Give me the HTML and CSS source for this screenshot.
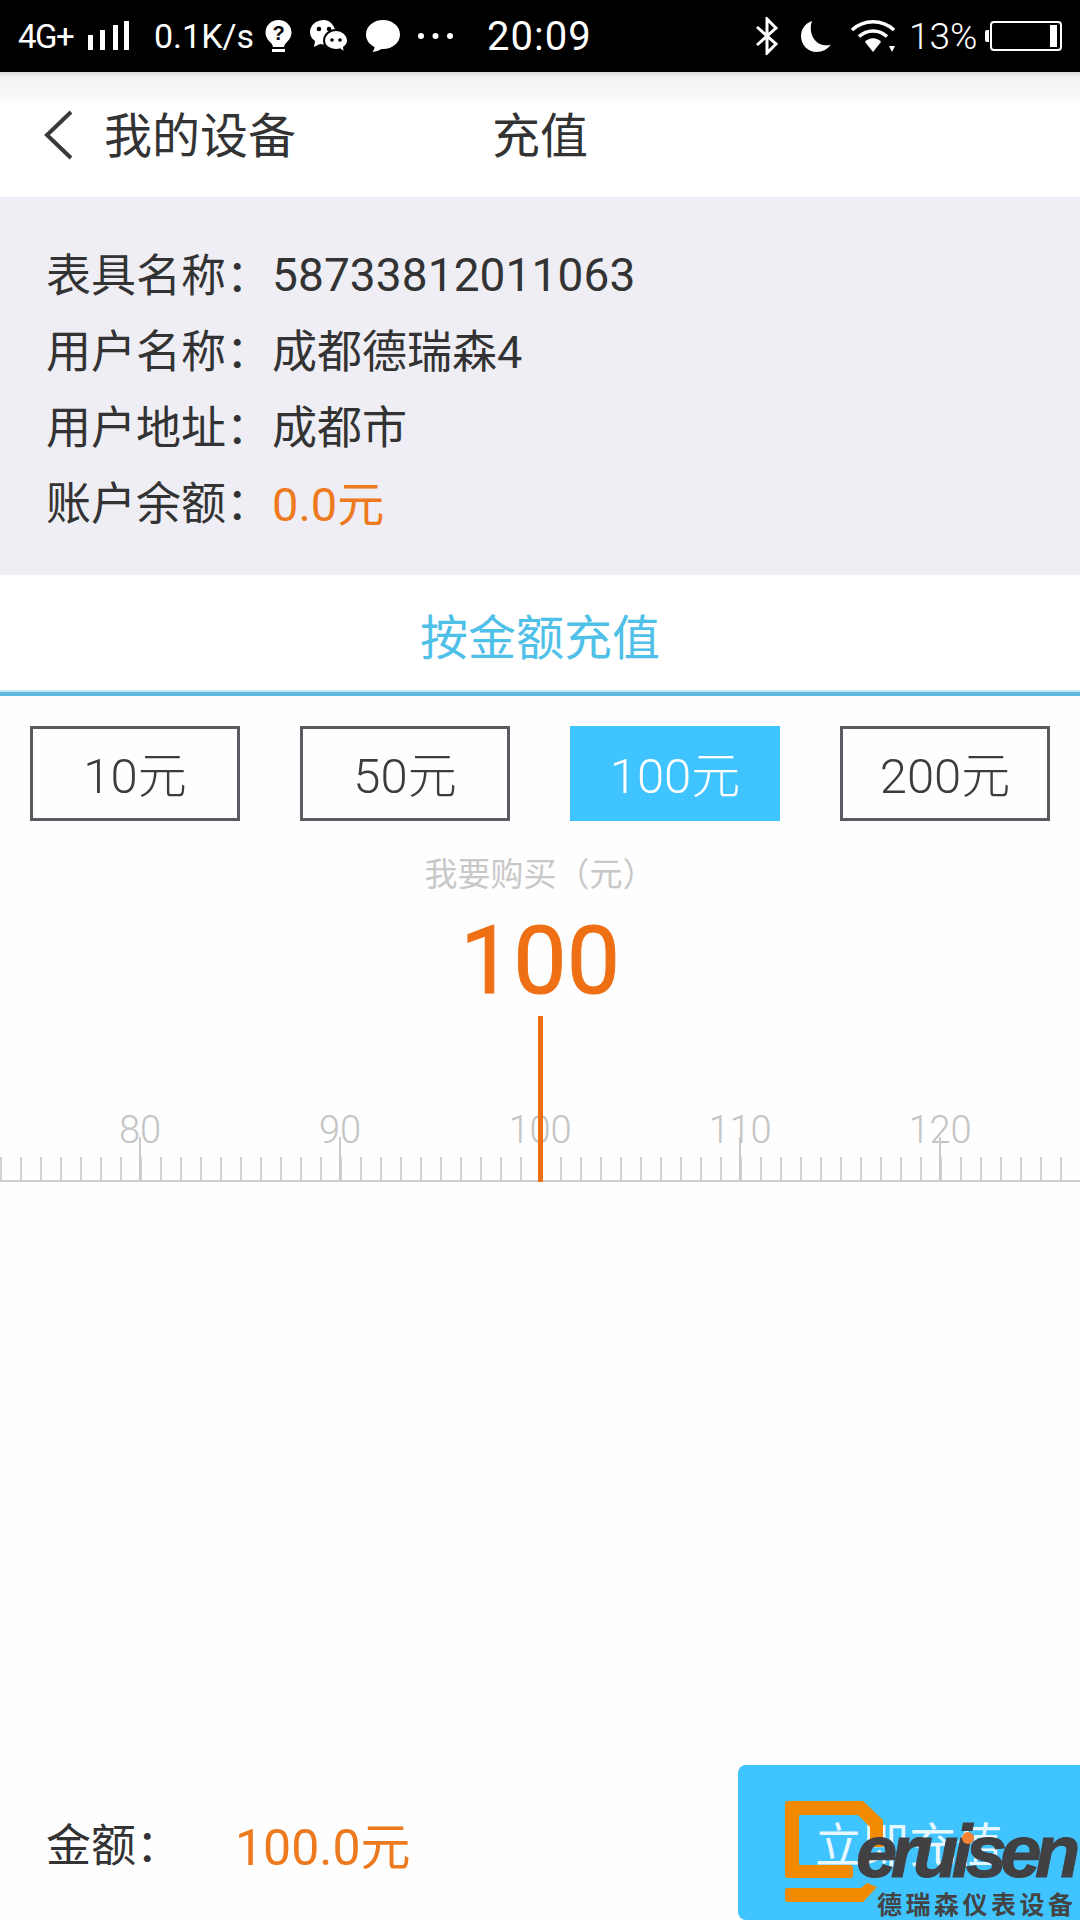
FILE: index.html
```html
<!DOCTYPE html>
<html lang="zh">
<head>
  <meta charset="UTF-8" />
  <meta name="viewport" content="width=device-width, initial-scale=1.0" />
  <title>充值</title>
  <link rel="stylesheet" href="styles.css">
</head>
<body>
  <div class="page">
    <div class="statusbar">
      <span class="net">4G+</span>
      <svg class="ic-signal" width="41" height="29" viewBox="0 0 41 29" fill="#fff">
        <rect x="0" y="14" width="5" height="15"/>
        <rect x="12" y="9" width="5" height="20"/>
        <rect x="25" y="4" width="5" height="25"/>
        <rect x="36" y="0" width="5" height="29"/>
      </svg>
      <span class="speed">0.1K/s</span>
      <svg class="ic-bulb" width="27" height="32" viewBox="0 0 27 32">
        <path fill="#fff" d="M13.5 0C6 0 0.500 5.500 0.500 12.500C0.500 17 3 20 5.500 22.500C7 24 7.500 25 8 27H19C19.500 25 20 24 21.500 22.500C24 20 26.500 17 26.500 12.500C26.500 5.500 21 0 13.500 0Z"/>
        <rect x="7" y="29" width="13" height="3" fill="#fff"/>
        <text x="13.500" y="20" text-anchor="middle" class="bulb-mark">?</text>
      </svg>
      <svg class="ic-wechat" width="38" height="33" viewBox="0 0 38 33">
        <path fill="#fff" d="M14 0C6 0 0 5.500 0 12C0 16 2 19 5 21L4 27L10 24C12 24.500 14 24.500 16 24.500L26 12C24 5 20 0 14 0Z"/>
        <path fill="#fff" stroke="#000" stroke-width="2" d="M26 10C19 10 14 15 14 20.500C14 26 19 30 26 30C27.500 30 29 30 30 29.500L35 33L34 27.500C36.500 25.500 38 23.500 38 20.500C38 15 33 10 26 10Z"/>
        <circle cx="9" cy="9" r="2.300"/>
        <circle cx="19" cy="9" r="2.300"/>
        <circle cx="22" cy="20" r="1.800"/>
        <circle cx="30" cy="20" r="1.800"/>
      </svg>
      <svg class="ic-msg" width="34" height="32" viewBox="0 0 34 32" fill="#fff">
        <path d="M17 0C7.500 0 0 6.300 0 14.500C0 20 3.500 24.500 8.500 27C8.500 29 7.500 30.500 6.500 32C10 31.500 13 30.500 15.500 29C16 29 16.500 29 17 29C26.500 29 34 22.700 34 14.500C34 6.300 26.500 0 17 0Z"/>
      </svg>
      <svg class="ic-dots" width="35" height="6" viewBox="0 0 35 6" fill="#fff">
        <circle cx="3" cy="3" r="3"/>
        <circle cx="17.500" cy="3" r="3"/>
        <circle cx="32" cy="3" r="3"/>
      </svg>
      <span class="clock">20:09</span>
      <svg class="ic-bt" width="22" height="38" viewBox="0 0 22 38" fill="none" stroke="#fff" stroke-width="3">
        <path d="M1 10L20 27L11 36V2L20 11L1 28"/>
      </svg>
      <svg class="ic-moon" width="30" height="31" viewBox="0 0 30 31" fill="#fff">
        <path d="M11 0C4.500 2 0 8 0 15C0 24 7 31 15.500 31C21.500 31 27 28 30 23.500C26 25 21 24.500 17 22C10.500 17.500 8 8 11 0Z"/>
      </svg>
      <svg class="ic-wifi" width="44" height="32" viewBox="0 0 44 32">
        <g fill="none" stroke="#fff" stroke-width="3.500">
          <path d="M1 10C13 -1 31 -1 43 10"/>
          <path d="M8 16.500C16 9 28 9 36 16.500"/>
        </g>
        <path fill="#fff" d="M14 22C18 17 26 17 30 22L22 32Z"/>
        <path fill="#fff" d="M38 26H44L41 32Z"/>
      </svg>
      <span class="batt-text">13%</span>
      <div class="battery"><div class="battery-level"></div></div>
    </div>

    <div class="navbar">
      <svg class="back" width="30" height="50" viewBox="0 0 30 50" fill="none" stroke="#3a3a3a" stroke-width="4">
        <path d="M27 2L3 25L27 48"/>
      </svg>
      <span class="nav-back">我的设备</span>
      <span class="nav-title">充值</span>
    </div>

    <div class="info">
      <div class="info-row"><span class="info-key">表具名称&#xFF1A;</span><span class="info-num">58733812011063</span></div>
      <div class="info-row"><span class="info-key">用户名称&#xFF1A;</span><span class="info-val">成都德瑞森4</span></div>
      <div class="info-row"><span class="info-key">用户地址&#xFF1A;</span><span class="info-val">成都市</span></div>
      <div class="info-row"><span class="info-key">账户余额&#xFF1A;</span><span class="info-val info-money orange">0.0元</span></div>
    </div>

    <div class="tab">按金额充值</div>

    <div class="amounts">
      <div class="amount">10元</div>
      <div class="amount">50元</div>
      <div class="amount active">100元</div>
      <div class="amount">200元</div>
    </div>

    <div class="buy-label">我要购买&#xFF08;元&#xFF09;</div>
    <div class="buy-value">100</div>

    <div class="ruler">
      <div class="ruler-labels">
        <span>80</span>
        <span>90</span>
        <span>100</span>
        <span>110</span>
        <span>120</span>
      </div>
      <div class="ruler-ticks"></div>
      <div class="pointer"></div>
    </div>

    <div class="footer">
      <div class="total">
        <span class="total-key">金额&#xFF1A;</span>
        <span class="total-val orange">100.0元</span>
      </div>
      <div class="pay">立即充值</div>
    </div>

    <div class="watermark">
      <svg class="wm-d" width="100" height="102" viewBox="0 0 100 102" fill="#f28a00">
        <path d="M3 0H78L98 19V46H85V26L73 14H14V64H65C67 64 68 66 68 68V74C68 76 67 77 65 77H3C1 77 0 76 0 74V3C0 1 1 0 3 0Z"/>
        <path d="M3 87H76L82 82L92 86L78 101H3C1 101 0 100 0 98V90C0 88 1 87 3 87Z"/>
      </svg>
      <span class="wm-name">eruisen</span>
      <span class="wm-dot"></span>
      <span class="wm-cn">德瑞森仪表设备</span>
    </div>
  </div>
</body>
</html>
```

FILE: styles.css
```css
* {
  box-sizing: border-box;
}
body {
  margin: 0;
  background: #fff;
  font-family: Roboto, "Noto Sans CJK SC", sans-serif;
  color: #333;
}
.page {
  position: relative;
  width: 1080px;
  height: 1920px;
  overflow: hidden;
  display: flex;
  flex-direction: column;
  background: #fefefe;
}
.orange {
  color: #ee7a1f;
}

/* status bar */
.statusbar {
  height: 72px;
  background: #000;
  color: #fff;
  display: flex;
  align-items: center;
  padding: 0 18px;
  flex-shrink: 0;
}
.net {
  width: 70px;
  font-size: 33px;
  letter-spacing: -1.500px;
}
.ic-signal {
  margin-top: -1px;
}
.speed {
  width: 111px;
  margin-left: 25px;
  font-size: 34px;
}
.ic-wechat {
  margin-left: 18px;
}
.ic-msg {
  margin-left: 18px;
}
.ic-dots {
  margin-left: 18px;
}
.clock {
  margin-left: 34px;
  font-size: 40px;
  letter-spacing: 1px;
}
.ic-bt {
  margin-left: auto;
}
.ic-moon {
  margin-left: 23px;
}
.ic-wifi {
  margin-left: 20px;
}
.bulb-mark {
  font-family: "Liberation Sans", sans-serif;
  font-size: 20px;
  font-weight: bold;
  fill: #000;
}
.batt-text {
  width: 70px;
  margin-left: 14px;
  font-size: 37px;
  font-weight: 300;
  white-space: nowrap;
}
.battery {
  position: relative;
  width: 72px;
  height: 30px;
  margin-left: 11px;
  border: 2px solid #fff;
  border-radius: 4px;
  display: flex;
  justify-content: flex-end;
  padding: 2px 3px;
}
.battery::before {
  content: "";
  position: absolute;
  left: -7px;
  top: 7px;
  width: 4px;
  height: 12px;
  background: #fff;
  border-radius: 2px 0 0 2px;
}
.battery-level {
  width: 7px;
  background: #fff;
}

/* nav */
.navbar {
  position: relative;
  height: 125px;
  flex-shrink: 0;
  display: flex;
  align-items: center;
  padding-left: 44px;
  font-size: 48px;
  color: #333;
  background: linear-gradient(#d9d9d9 0, #f4f4f4 6px, #f8f8f8 24px, #fff 34px);
}
.nav-back {
  margin-left: 30px;
  padding-bottom: 5px;
}
.nav-title {
  position: absolute;
  left: 0;
  right: 0;
  text-align: center;
  padding-bottom: 5px;
  pointer-events: none;
}

/* info panel */
.info {
  height: 378px;
  flex-shrink: 0;
  padding: 40px 0 0 46px;
  background: #eeeef4;
  font-size: 45px;
}
.info-row {
  height: 76px;
  display: flex;
  align-items: center;
}
.info-key {
  width: 226px;
  flex-shrink: 0;
  padding-bottom: 5px;
}
.info-val {
  padding-bottom: 5px;
}
.info-num {
  font-size: 46px;
  letter-spacing: 0.100px;
}
.info-money {
  font-size: 47px;
}

/* tab */
.tab {
  height: 121px;
  flex-shrink: 0;
  display: flex;
  align-items: center;
  justify-content: center;
  font-size: 48px;
  color: #4fc0e8;
  background: #fff;
  border-bottom: 4px solid #5fb9dd;
  box-shadow: inset 0 -2px 0 #c5e6f2;
}

/* amount choices */
.amounts {
  display: flex;
  justify-content: space-between;
  padding: 30px 30px 0;
}
.amount {
  width: 210px;
  height: 95px;
  border: 3px solid #5a5a60;
  padding-bottom: 4px;
  display: flex;
  align-items: center;
  justify-content: center;
  font-size: 49px;
  font-weight: 300;
  color: #3c3c3c;
}
.amount.active {
  background: #40c4ff;
  border-color: #40c4ff;
  color: #fff;
}
.buy-label {
  margin-top: 34px;
  height: 40px;
  line-height: 40px;
  text-align: center;
  font-size: 33px;
  color: #c8c8c8;
}
.buy-value {
  margin-top: 16px;
  height: 100px;
  line-height: 100px;
  text-align: center;
  font-size: 95px;
  -webkit-text-stroke: 1px #ee6f14;
  color: #ee6f14;
}

/* ruler */
.ruler {
  position: relative;
  margin-top: 5px;
  height: 166px;
  display: flex;
  flex-direction: column;
  justify-content: flex-end;
}
.ruler-labels {
  display: grid;
  grid-template-columns: repeat(5, 200px);
  padding-left: 40px;
  margin-bottom: -11px;
  font-size: 38px;
  font-weight: 300;
  line-height: 36px;
  text-align: center;
  color: #c4c4c4;
}
.ruler-ticks {
  height: 45px;
  border-bottom: 2px solid #cfcfcf;
  background-image:
    repeating-linear-gradient(90deg, #cacaca 0, #cacaca 2px, transparent 2px, transparent 200px),
    repeating-linear-gradient(90deg, #d2d2d2 0, #d2d2d2 2px, transparent 2px, transparent 20px);
  background-repeat: repeat-x, repeat-x;
  background-size: 200px 100%, 20px 23px;
  background-position: 139px 0, 0 100%;
}
.pointer {
  position: absolute;
  left: 538px;
  top: 0;
  bottom: 0;
  width: 5px;
  background: #ee6f14;
}

/* footer */
.footer {
  margin-top: auto;
  height: 155px;
  flex-shrink: 0;
  display: flex;
  justify-content: space-between;
  align-items: stretch;
}
.total {
  display: flex;
  align-items: center;
  padding-left: 46px;
  font-size: 45px;
}
.total-key {
  width: 189px;
}
.total-val {
  font-size: 50px;
}
.pay {
  width: 342px;
  background: #40c4ff;
  border-radius: 8px 0 0 8px;
  color: #e8f8ff;
  font-size: 47px;
  display: flex;
  align-items: center;
  justify-content: center;
  padding-bottom: 2px;
}

/* watermark sits on top of the pay button */
.watermark {
  position: absolute;
  right: 0;
  bottom: 0;
  width: 295px;
  height: 119px;
}
.wm-d {
  position: absolute;
  left: 0;
  top: 0;
}
.wm-name {
  position: absolute;
  left: 71px;
  top: 9px;
  font-family: "Liberation Sans", sans-serif;
  font-size: 74px;
  font-weight: bold;
  font-style: italic;
  letter-spacing: -6.500px;
  line-height: 84px;
  -webkit-text-stroke: 1px #414042;
  color: #414042;
}
.wm-dot {
  position: absolute;
  left: 177px;
  top: 31px;
  width: 12px;
  height: 12px;
  border-radius: 50%;
  background: #f58233;
}
.wm-cn {
  position: absolute;
  left: 92px;
  top: 90px;
  font-size: 25px;
  font-weight: bold;
  letter-spacing: 3.500px;
  line-height: 30px;
  white-space: nowrap;
  color: #444;
}
```
